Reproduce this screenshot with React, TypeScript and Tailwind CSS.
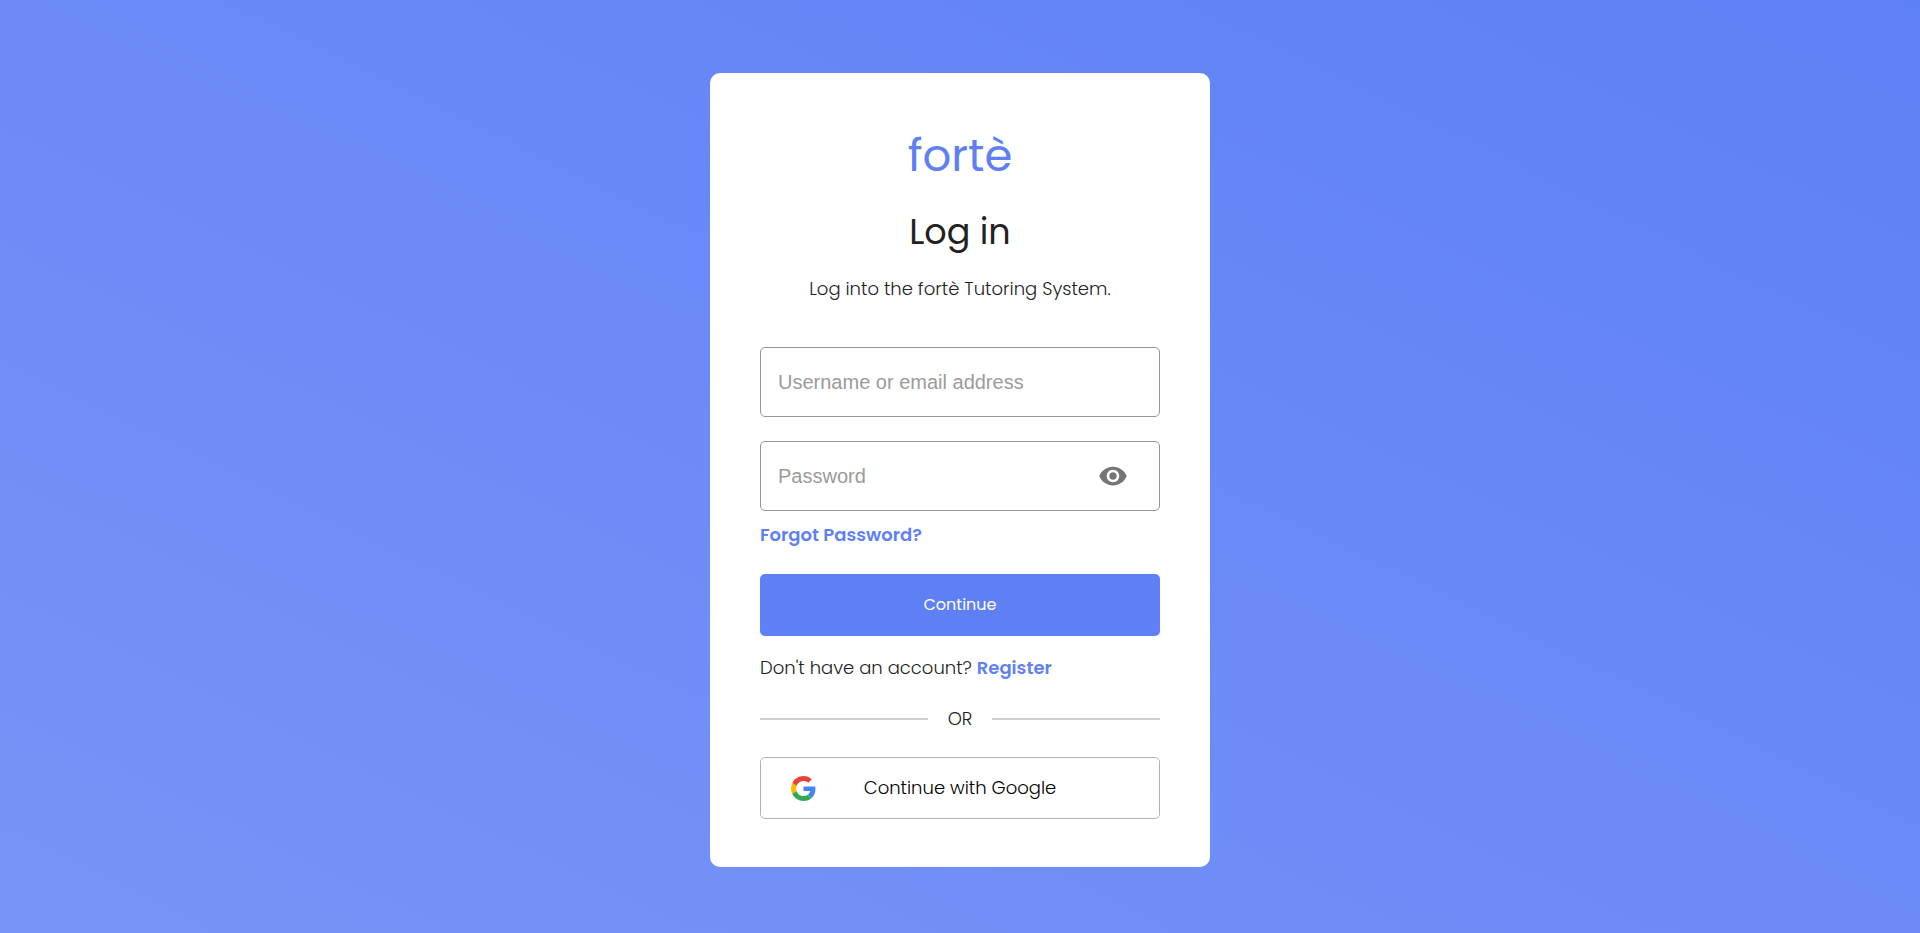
import { useState } from "react";

function GoogleLogo() {
  return (
    <svg viewBox="0 0 48 48" className="size-[25px]" aria-hidden="true">
      <path fill="#EA4335" d="M24 9.5c3.54 0 6.71 1.22 9.21 3.6l6.85-6.85C35.9 2.38 30.47 0 24 0 14.62 0 6.51 5.38 2.56 13.22l7.98 6.19C12.43 13.72 17.74 9.5 24 9.5z" />
      <path fill="#4285F4" d="M46.98 24.55c0-1.57-.15-3.09-.38-4.55H24v9.02h12.94c-.58 2.96-2.26 5.48-4.78 7.18l7.73 6c4.51-4.18 7.09-10.36 7.09-17.65z" />
      <path fill="#FBBC05" d="M10.53 28.59c-.48-1.45-.76-2.99-.76-4.59s.27-3.14.76-4.59l-7.98-6.19C.92 16.46 0 20.12 0 24c0 3.88.92 7.54 2.56 10.78l7.97-6.19z" />
      <path fill="#34A853" d="M24 48c6.48 0 11.93-2.13 15.89-5.81l-7.73-6c-2.15 1.45-4.92 2.3-8.16 2.3-6.26 0-11.57-4.22-13.47-9.91l-7.98 6.19C6.51 42.62 14.62 48 24 48z" />
    </svg>
  );
}

function EyeIcon() {
  return (
    <svg viewBox="0 0 24 24" className="size-[30px]" fill="currentColor" aria-hidden="true">
      <path d="M12 4.5C7 4.5 2.73 7.61 1 12c1.73 4.39 6 7.5 11 7.5s9.27-3.11 11-7.5c-1.73-4.39-6-7.5-11-7.5zM12 17c-2.76 0-5-2.24-5-5s2.24-5 5-5 5 2.24 5 5-2.24 5-5 5zm0-8c-1.66 0-3 1.34-3 3s1.34 3 3 3 3-1.34 3-3-1.34-3-3-3z" />
    </svg>
  );
}

const fieldClass =
  "h-[70px] w-full rounded-[5px] border border-[#979797] bg-white px-[17px] font-['Liberation_Sans',Arial,sans-serif] text-xl text-[#222] placeholder:text-[#9b9b9b]";
const linkClass = "font-semibold text-[#5f80f5]";

export default function App() {
  const [visible, setVisible] = useState(false);

  return (
    <main className="flex min-h-screen items-start justify-center bg-[linear-gradient(to_bottom_left,#5e80f5,#7894f8)] px-4 pt-[73px] pb-16 font-[Poppins,Inter,sans-serif] text-lg leading-7 font-light text-[#222]">
      <section className="w-full max-w-[500px] rounded-[10px] bg-white px-[50px] py-12">
        <header className="text-center">
          <p className="text-[45px] leading-[70px] font-normal text-[#5f80f5]">fortè</p>
          <h1 className="mt-[14px] text-[35px] leading-[54px] font-normal">Log in</h1>
          <p className="mt-4">Log into the fortè Tutoring System.</p>
        </header>
        <form className="mt-11" onSubmit={(e) => e.preventDefault()}>
          <input type="text" aria-label="Username or email address" placeholder="Username or email address" className={fieldClass} />
          <div className="relative mt-6">
            <input type={visible ? "text" : "password"} aria-label="Password" placeholder="Password" className={fieldClass} />
            <button type="button" aria-label="Show password" onClick={() => setVisible(!visible)} className="absolute inset-y-0 right-8 flex items-center text-[#757575]">
              <EyeIcon />
            </button>
          </div>
          <a href="#forgot" className={`mt-[10px] block w-fit ${linkClass}`}>Forgot Password?</a>
          <button type="submit" className="mt-[25px] h-[62px] w-full rounded-[5px] bg-[#5f80f5] text-base font-normal text-white">Continue</button>
        </form>
        <p className="mt-[18px]">
          Don't have an account? <a href="#register" className={linkClass}>Register</a>
        </p>
        <div className="mt-[23px] flex items-center gap-5">
          <span className="h-[2px] flex-1 bg-[#d1d1d1]" />
          <span>OR</span>
          <span className="h-[2px] flex-1 bg-[#d1d1d1]" />
        </div>
        <button type="button" className="mt-6 grid h-[62px] w-full grid-cols-[1fr_auto_1fr] items-center rounded-[5px] border border-[#b2b2b2] px-[30px] text-black">
          <GoogleLogo />
          <span>Continue with Google</span>
        </button>
      </section>
    </main>
  );
}
